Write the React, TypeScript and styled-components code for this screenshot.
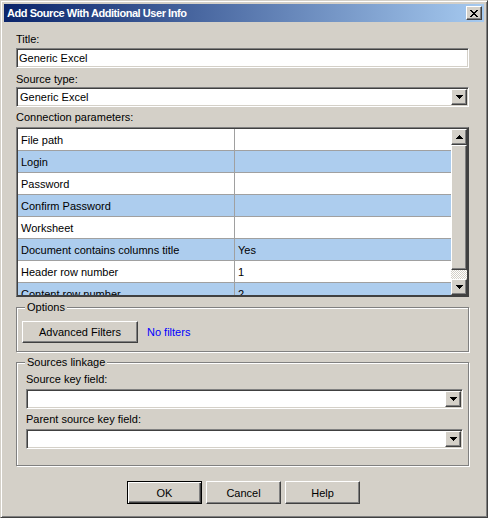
import React from 'react';
import styled, { createGlobalStyle, css } from 'styled-components';

const GlobalStyle = createGlobalStyle`
  html, body {
    margin: 0;
    padding: 0;
    background: #d4d0c8;
  }
  body {
    font-family: "Liberation Sans", Arial, sans-serif;
    font-size: 11px;
    color: #000;
  }
  * {
    box-sizing: border-box;
  }
`;

const raised = css`
  background: #d4d0c8;
  border: 1px solid;
  border-color: #fff #404040 #404040 #fff;
  box-shadow: inset -1px -1px 0 #808080, inset 1px 1px 0 #d4d0c8;
`;

const sunken = css`
  background: #fff;
  border: 1px solid;
  border-color: #808080 #fff #fff #808080;
  box-shadow: inset 1px 1px 0 #404040, inset -1px -1px 0 #d4d0c8;
  padding: 1px;
`;

const Window = styled.div`
  width: 488px;
  height: 518px;
  background: #d4d0c8;
  border: 1px solid;
  border-color: #d4d0c8 #404040 #404040 #d4d0c8;
  box-shadow: inset 1px 1px 0 #fff, inset -1px -1px 0 #808080;
  padding: 3px;
  display: flex;
  flex-direction: column;
`;

const TitleBar = styled.div`
  height: 18px;
  flex: none;
  display: flex;
  align-items: center;
  padding: 0 2px 0 3px;
  background: linear-gradient(to right, #0a246a, #a6caf0);
  color: #fff;
  font-weight: bold;
  font-size: 11px;
`;

const TitleText = styled.span`
  flex: 1;
  white-space: nowrap;
  letter-spacing: -0.45px;
`;

const CloseButton = styled.div`
  ${raised};
  width: 16px;
  height: 14px;
  display: flex;
  align-items: center;
  justify-content: center;
  padding-right: 1px;
`;

const Body = styled.div`
  flex: 1;
  display: flex;
  flex-direction: column;
  padding: 11px 15px 0 12px;
`;

const Label = styled.div<{ $gap?: number }>`
  height: 13px;
  line-height: 13px;
  margin-top: ${(p) => p.$gap ?? 0}px;
  white-space: nowrap;
`;

const TextField = styled.div`
  ${sunken};
  height: 20px;
  margin-top: 2px;
  line-height: 16px;
  padding-left: 2px;
`;

const Combo = styled.div<{ $gap?: number }>`
  ${sunken};
  height: 20px;
  margin-top: ${(p) => p.$gap ?? 1}px;
  display: flex;
`;

const ComboText = styled.div`
  flex: 1;
  line-height: 16px;
  padding-left: 2px;
`;

const ArrowButton = styled.div`
  ${raised};
  width: 16px;
  height: 16px;
  flex: none;
  display: flex;
  align-items: center;
  justify-content: center;
`;

const Grid = styled.div`
  margin-top: 3px;
  height: 170px;
  border: 1px solid;
  border-color: #808080 #404040 #404040 #808080;
  box-shadow: inset 0 0 0 1px #404040;
  padding: 1px;
  display: flex;
  background: #fff;
`;

const Rows = styled.div`
  flex: 1;
  overflow: hidden;
`;

const Row = styled.div<{ $alt: boolean }>`
  height: 22px;
  display: flex;
  border-bottom: 1px solid #a0a0a0;
  background: ${(p) => (p.$alt ? '#adcdee' : '#fff')};
`;

const NameCell = styled.div`
  width: 217px;
  flex: none;
  border-right: 1px solid #a0a0a0;
  padding: 1px 0 0 3px;
  line-height: 20px;
  white-space: nowrap;
  overflow: hidden;
`;

const ValueCell = styled.div`
  flex: 1;
  padding: 1px 0 0 3px;
  line-height: 20px;
`;

const ScrollBar = styled.div`
  width: 16px;
  flex: none;
  display: flex;
  flex-direction: column;
`;

const Thumb = styled.div`
  ${raised};
  height: 125px;
  flex: none;
`;

const Track = styled.div`
  flex: 1;
  background-color: #fff;
  background-image: conic-gradient(#d4d0c8 25%, #fff 0 50%, #d4d0c8 0 75%, #fff 0);
  background-size: 2px 2px;
`;

const Group = styled.fieldset`
  margin: 4px 0 0;
  padding: 0;
  min-width: 0;
  border: 1px solid #808080;
  box-shadow: 1px 1px 0 #fff, inset 1px 1px 0 #fff;
`;

const Legend = styled.legend`
  margin-left: 8px;
  padding: 0 2px;
  background: #d4d0c8;
  line-height: 13px;
  font-size: 11px;
`;

const OptionsRow = styled.div`
  display: flex;
  align-items: center;
  padding: 7px 0 8px 5px;
`;

const PushButton = styled.div<{ $w: number; $h: number; $default?: boolean }>`
  ${raised};
  width: ${(p) => p.$w}px;
  height: ${(p) => p.$h}px;
  display: flex;
  align-items: center;
  justify-content: center;
  ${(p) =>
    p.$default &&
    css`
      border: 1px solid #000;
      box-shadow: inset 1px 1px 0 #fff, inset -1px -1px 0 #404040, inset -2px -2px 0 #808080;
    `}
`;

const LinkText = styled.span`
  margin-left: 9px;
  color: #0000ff;
`;

const LinkageBody = styled.div`
  padding: 4px 5px 16px 9px;
`;

const ButtonRow = styled.div`
  display: flex;
  justify-content: center;
  gap: 4px;
  margin-top: 15px;
  padding-left: 2px;
`;

const CloseGlyph = () => (
  <svg width="8" height="7" viewBox="0 0 8 7" shapeRendering="crispEdges">
    <path
      fill="#000"
      d="M0 0h2v1h1v1h2v-1h1v-1h2v1h-1v1h-1v1h-1v1h1v1h1v1h1v1h-2v-1h-1v-1h-2v1h-1v1h-2v-1h1v-1h1v-1h1v-1h-1v-1h-1v-1h-1z"
    />
  </svg>
);

const Arrow = ({ up }: { up?: boolean }) => (
  <svg width="7" height="4" viewBox="0 0 7 4" shapeRendering="crispEdges">
    <path
      fill="#000"
      transform={up ? 'rotate(180 3.5 2)' : undefined}
      d="M0 0h7v1h-1v1h-1v1h-1v1h-1v-1h-1v-1h-1v-1h-1z"
    />
  </svg>
);

const params = [
  { name: 'File path', value: '' },
  { name: 'Login', value: '' },
  { name: 'Password', value: '' },
  { name: 'Confirm Password', value: '' },
  { name: 'Worksheet', value: '' },
  { name: 'Document contains columns title', value: 'Yes' },
  { name: 'Header row number', value: '1' },
  { name: 'Content row number', value: '2' },
];

export default function App() {
  return (
    <>
      <GlobalStyle />
      <Window>
        <TitleBar>
          <TitleText>Add Source With Additional User Info</TitleText>
          <CloseButton>
            <CloseGlyph />
          </CloseButton>
        </TitleBar>
        <Body>
          <Label>Title:</Label>
          <TextField>Generic Excel</TextField>

          <Label $gap={5}>Source type:</Label>
          <Combo>
            <ComboText>Generic Excel</ComboText>
            <ArrowButton>
              <Arrow />
            </ArrowButton>
          </Combo>

          <Label $gap={4}>Connection parameters:</Label>
          <Grid>
            <Rows>
              {params.map((p, i) => (
                <Row key={p.name} $alt={i % 2 === 1}>
                  <NameCell>{p.name}</NameCell>
                  <ValueCell>{p.value}</ValueCell>
                </Row>
              ))}
            </Rows>
            <ScrollBar>
              <ArrowButton>
                <Arrow up />
              </ArrowButton>
              <Thumb />
              <Track />
              <ArrowButton>
                <Arrow />
              </ArrowButton>
            </ScrollBar>
          </Grid>

          <Group>
            <Legend>Options</Legend>
            <OptionsRow>
              <PushButton $w={116} $h={22}>Advanced Filters</PushButton>
              <LinkText>No filters</LinkText>
            </OptionsRow>
          </Group>

          <Group>
            <Legend>Sources linkage</Legend>
            <LinkageBody>
              <Label>Source key field:</Label>
              <Combo $gap={3}>
                <ComboText />
                <ArrowButton>
                  <Arrow />
                </ArrowButton>
              </Combo>
              <Label $gap={4}>Parent source key field:</Label>
              <Combo $gap={3}>
                <ComboText />
                <ArrowButton>
                  <Arrow />
                </ArrowButton>
              </Combo>
            </LinkageBody>
          </Group>

          <ButtonRow>
            <PushButton $w={75} $h={23} $default>OK</PushButton>
            <PushButton $w={75} $h={23}>Cancel</PushButton>
            <PushButton $w={75} $h={23}>Help</PushButton>
          </ButtonRow>
        </Body>
      </Window>
    </>
  );
}
